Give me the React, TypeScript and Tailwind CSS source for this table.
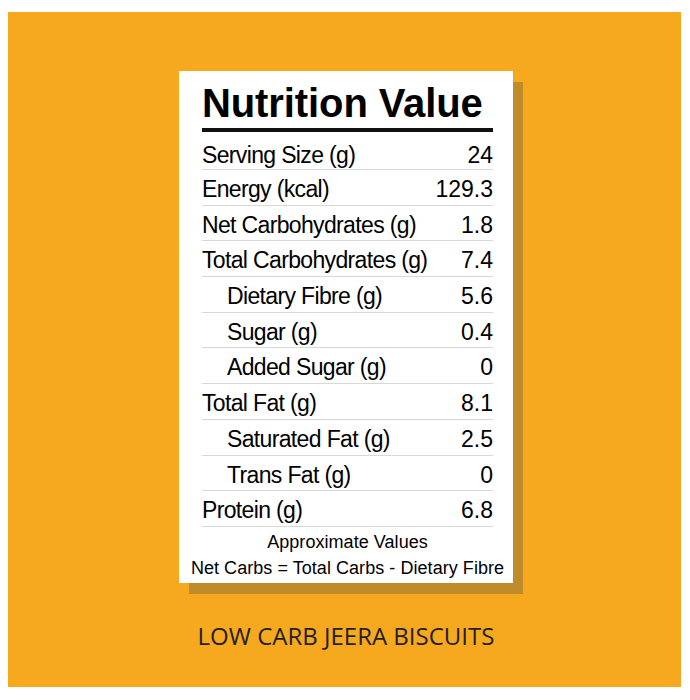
import React from "react";

const rows: { label: string; value: string; indent?: boolean }[] = [
  { label: "Energy (kcal)", value: "129.3" },
  { label: "Net Carbohydrates (g)", value: "1.8" },
  { label: "Total Carbohydrates (g)", value: "7.4" },
  { label: "Dietary Fibre (g)", value: "5.6", indent: true },
  { label: "Sugar (g)", value: "0.4", indent: true },
  { label: "Added Sugar (g)", value: "0", indent: true },
  { label: "Total Fat (g)", value: "8.1" },
  { label: "Saturated Fat (g)", value: "2.5", indent: true },
  { label: "Trans Fat (g)", value: "0", indent: true },
  { label: "Protein (g)", value: "6.8" },
];

export default function App() {
  return (
    <div className="w-[690px] h-[700px] bg-white pt-[12px] pl-[8px] pr-[9px] pb-[13px]">
      <div className="w-full h-full bg-[#F6A91E] flex flex-col pt-[59px] pl-[171px]">
        <div className="w-[334px] bg-white shadow-[10px_11px_0_#c08b2b] pt-[10px] pl-[23px] pr-[20px] text-black font-['Liberation_Sans',Arial,sans-serif]">
          <div className="text-[40px] leading-[44px] font-bold tracking-[-0.1px]">
            Nutrition Value
          </div>
          <div className="mt-[3px] h-[4px] bg-[#111]" />
          <div className="text-[23px] whitespace-nowrap">
            <div className="flex justify-between h-[38px] pt-[9px] border-b border-[#d8d8d8] leading-[28px]">
              <span className="tracking-[-0.65px]">Serving Size (g)</span>
              <span>24</span>
            </div>
            {rows.map((r) => (
              <div
                key={r.label}
                className="flex justify-between h-[35.7px] pt-[5px] border-b border-[#d8d8d8] leading-[28px]"
              >
                <span className={r.indent ? "pl-[25px] tracking-[-0.65px]" : "tracking-[-0.65px]"}>{r.label}</span>
                <span>{r.value}</span>
              </div>
            ))}
          </div>
          <div className="text-[18px] leading-[26px] tracking-[0.05px] text-center pt-[2px] pb-[2px] -ml-[14px] -mr-[14px] whitespace-nowrap">
            <div>Approximate Values</div>
            <div>Net Carbs = Total Carbs - Dietary Fibre</div>
          </div>
        </div>
        <div className="w-[334px] mt-[38px] text-center text-[24px] leading-[30px] text-[#231f20] font-['Open_Sans',sans-serif]">
          LOW CARB JEERA BISCUITS
        </div>
      </div>
    </div>
  );
}
